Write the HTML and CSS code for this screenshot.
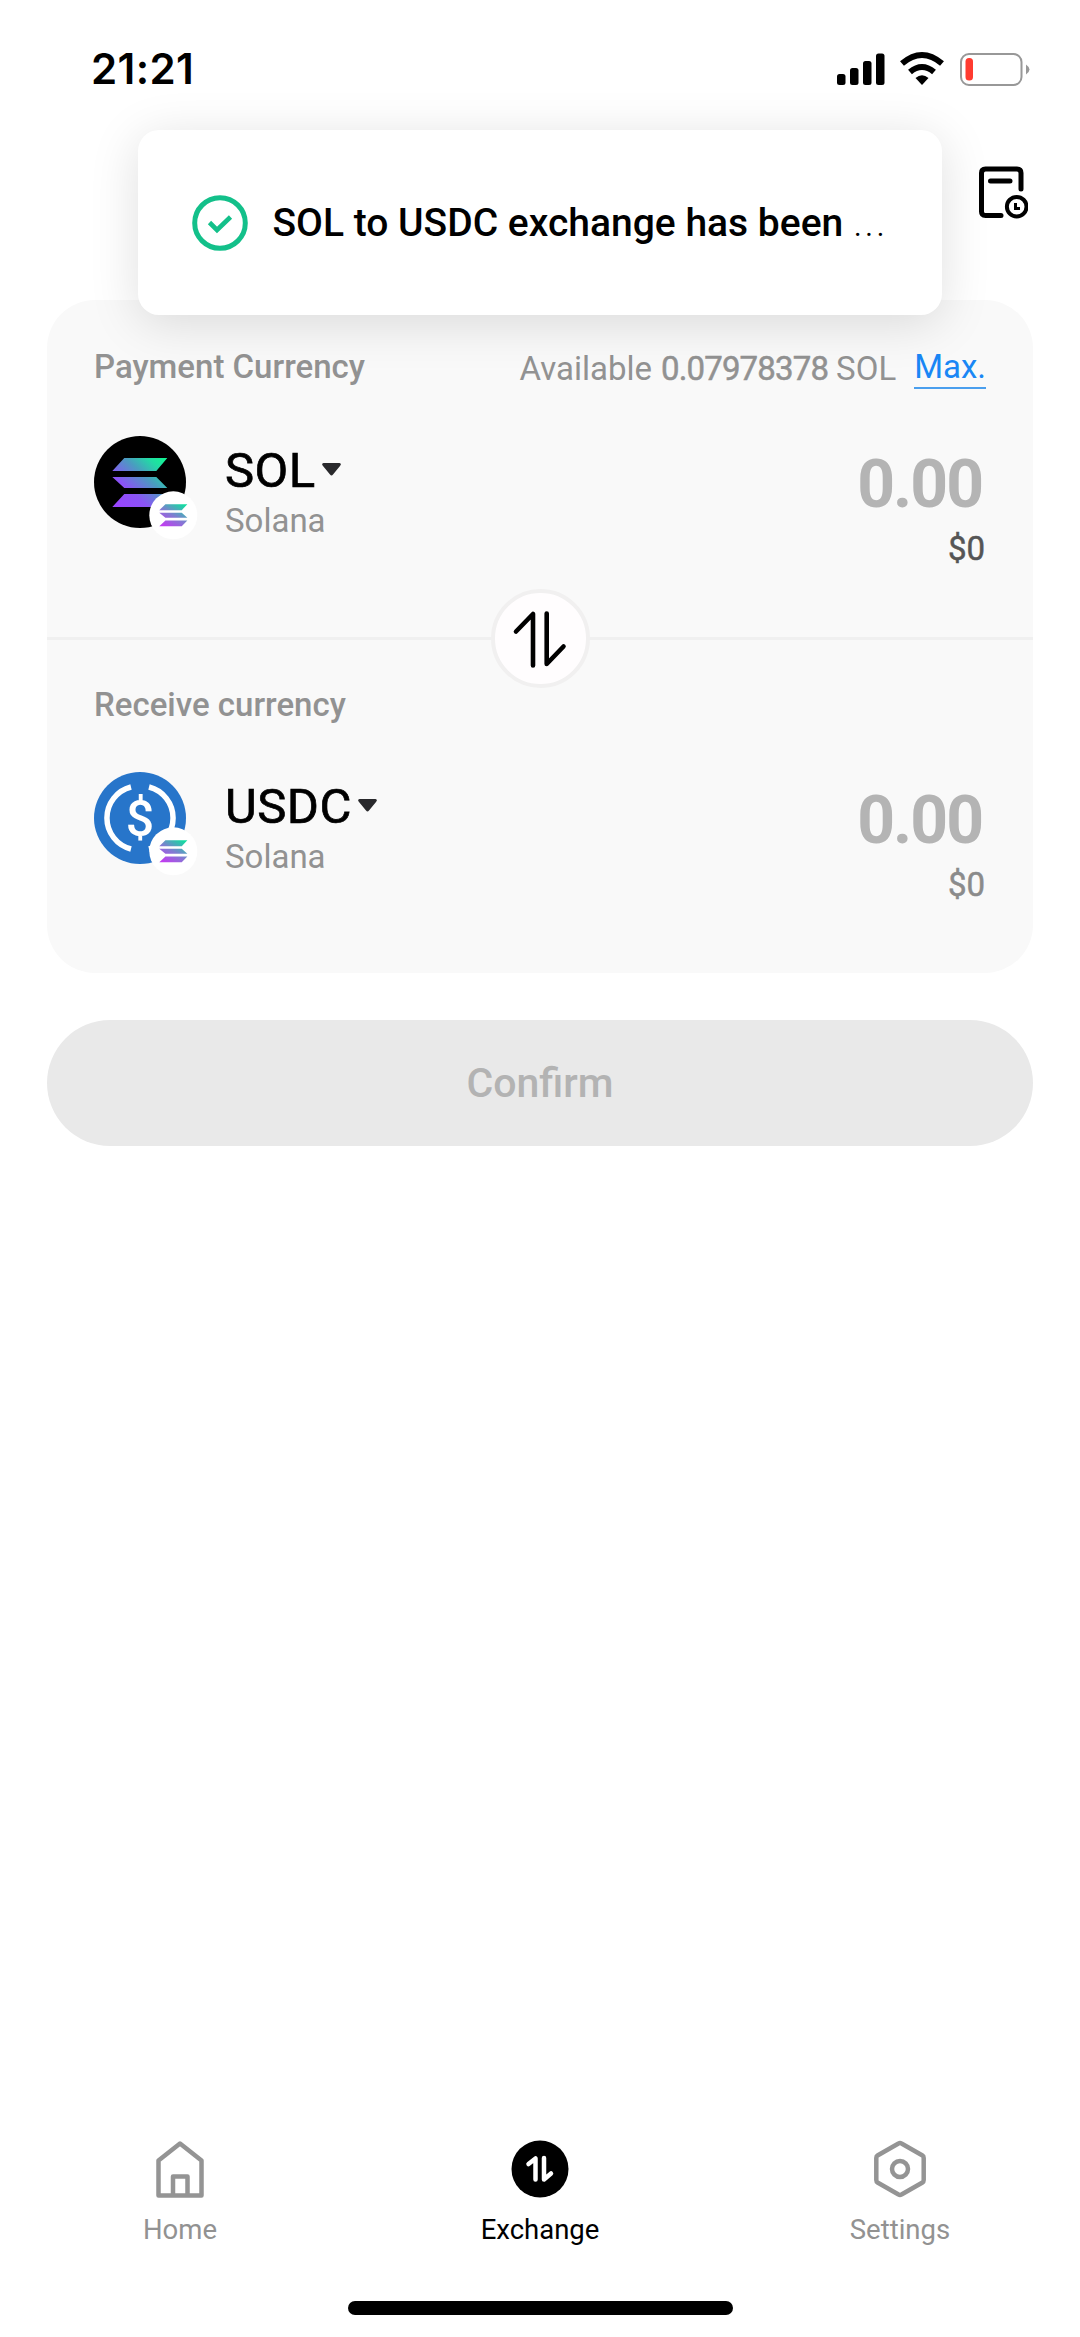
FILE: index.html
```html
<!DOCTYPE html>
<html lang="en">
<head>
<meta charset="utf-8">
<title>Exchange</title>
<link rel="stylesheet" href="styles.css">
</head>
<body>
<svg class="defs" aria-hidden="true">
  <defs>
    <linearGradient id="sol" gradientUnits="userSpaceOnUse" x1="6" y1="48" x2="50" y2="0">
      <stop offset="0" stop-color="#9945ff"/><stop offset=".3" stop-color="#8a54f5"/><stop offset=".62" stop-color="#4a9cc0"/><stop offset=".85" stop-color="#22dba5"/><stop offset="1" stop-color="#14f195"/>
    </linearGradient>
    <linearGradient id="sol-small" gradientUnits="userSpaceOnUse" x1="12" y1="50" x2="46" y2="0">
      <stop offset="0" stop-color="#c03df0"/><stop offset=".5" stop-color="#7d7fd0"/><stop offset="1" stop-color="#12dca0"/>
    </linearGradient>
    <path id="bars" d="M12 0H55L44 13H0ZM0 19H44L55 30H12ZM12 36H55L44 49H0Z"/>
  </defs>
</svg>
<main class="screen">
  <header class="status">
    <span class="time">21:21</span>
    <svg class="indicators" width="194" height="36" viewBox="836 50 194 36">
      <g><rect x="837" y="73" width="8.5" height="11" rx="2.5"/><rect x="850" y="67" width="8.5" height="17" rx="2.5"/><rect x="863" y="60" width="8.5" height="24" rx="2.5"/><rect x="876" y="52.5" width="8.5" height="31.5" rx="2.5"/></g>
      <g fill="none" stroke="#000" stroke-width="6"><path d="M902 62.5Q922 45.500 942 62.500"/><path d="M910 71Q922 61 934 71"/></g>
      <path d="M915.500 77Q922 71.500 928.500 77L922 84Z"/>
      <rect x="961" y="53" width="60.500" height="31" rx="8" fill="none" stroke="#989898" stroke-width="2"/>
      <rect x="965.500" y="57" width="7.500" height="22.500" rx="3.5" fill="#ff3b30"/>
      <path d="M1026 63.500Q1033 68.500 1026 73.500Z" fill="#989898"/>
    </svg>
  </header>
  <div class="topbar">
    <svg width="52" height="56" viewBox="976 164 52 56" fill="none" stroke="#000" stroke-width="5" stroke-linecap="round" stroke-linejoin="round">
      <path d="M1021 189V173Q1021 169 1017 169H985.500Q981.500 169 981.500 173V211.500Q981.500 215.500 985.500 215.500H1001M990.500 181H1010"/>
      <circle cx="1016.700" cy="206.700" r="9.800" stroke-width="4"/>
      <path d="M1015.500 203V208.500H1020" stroke-width="3" stroke-linecap="butt" stroke-linejoin="miter"/>
    </svg>
  </div>

  <section class="card">
    <div class="side">
      <div class="caption">
        <span class="label pay">Payment Currency</span>
        <span class="available"><span class="word">Available</span><span class="figure">0.07978378</span><span class="unit">SOL</span><a class="max">Max.</a></span>
      </div>
      <div class="row">
        <svg class="coin" width="106" height="106" viewBox="0 0 106 106">
          <circle cx="46" cy="46" r="46"/>
          <use href="#bars" transform="translate(18.300 22)" fill="url(#sol)"/>
          <circle cx="79.300" cy="79.300" r="24" fill="#fff"/>
          <use href="#bars" transform="translate(65.300 68.300) scale(.51 .45)" fill="url(#sol-small)"/>
        </svg>
        <div class="token">
          <div class="symbol"><span class="sol">SOL</span><svg class="caret" width="19" height="13" viewBox="0 0 19 13"><path d="M1.500 0H17.500Q20 .5 18 3L11 11.500Q9.500 13.500 8 11.500L1 3Q-1 .5 1.500 0Z" fill="#29292c"/></svg></div>
          <div class="network">Solana</div>
        </div>
        <div class="amount"><div class="value">0.00</div><div class="fiat strong">$0</div></div>
      </div>
    </div>
    <div class="divider">
      <button class="swap" aria-label="Swap"><svg width="60" height="60" viewBox="511 609 60 60" fill="none" stroke="#000" stroke-width="4.600" stroke-linecap="round" stroke-linejoin="round"><path d="M517 631.500L534 614V665.500M547.700 613.500V664L564.500 646.500"/></svg></button>
    </div>
    <div class="side second">
      <div class="caption"><span class="label">Receive currency</span></div>
      <div class="row">
        <svg class="coin" width="106" height="106" viewBox="0 0 106 106">
          <circle cx="46" cy="46" r="46" fill="#2775ca"/>
          <path d="M37 15A32 32 0 0 0 37 77M55 15A32 32 0 0 1 55 77" fill="none" stroke="#fff" stroke-width="5.500"/>
          <text class="dollar" x="46" y="63.500" text-anchor="middle">$</text>
          <circle cx="79.300" cy="79.300" r="24" fill="#fff"/>
          <use href="#bars" transform="translate(65.300 68.300) scale(.51 .45)" fill="url(#sol-small)"/>
        </svg>
        <div class="token">
          <div class="symbol"><span class="usdc">USDC</span><svg class="caret" width="19" height="13" viewBox="0 0 19 13"><path d="M1.500 0H17.500Q20 .5 18 3L11 11.500Q9.500 13.500 8 11.500L1 3Q-1 .5 1.500 0Z" fill="#29292c"/></svg></div>
          <div class="network">Solana</div>
        </div>
        <div class="amount"><div class="value">0.00</div><div class="fiat">$0</div></div>
      </div>
    </div>
  </section>

  <button class="confirm">Confirm</button>

  <nav class="tabs">
    <a class="tab">
      <svg width="60" height="60" viewBox="0 0 60 60" fill="none" stroke="#949494" stroke-width="4.500" stroke-linejoin="round"><path d="M8.500 21.500L30 4.500L51.500 21.500V56.500H8.500ZM23 56V37.500H37.500V56"/></svg>
      <span>Home</span>
    </a>
    <a class="tab active">
      <svg width="60" height="60" viewBox="0 0 60 60"><circle cx="30" cy="30" r="28.500"/><path d="M18.500 25L25.500 19.500V40.500M34 19V40.500L41 34.500" fill="none" stroke="#fff" stroke-width="4.500" stroke-linecap="round" stroke-linejoin="round"/></svg>
      <span>Exchange</span>
    </a>
    <a class="tab">
      <svg width="60" height="60" viewBox="0 0 60 60" fill="none" stroke="#949494" stroke-width="4.500" stroke-linejoin="round"><path d="M28.500 4.500Q30 3.500 31.500 4.500L52.500 16.500Q53.700 17.200 53.700 19V41Q53.700 42.800 52.500 43.500L31.500 55.500Q30 56.500 28.500 55.500L7.500 43.500Q6.300 42.800 6.300 41V19Q6.300 17.200 7.500 16.500Z"/><circle cx="30" cy="30" r="8"/></svg>
      <span>Settings</span>
    </a>
  </nav>
  <div class="home-indicator"></div>

  <div class="toast" role="status">
    <svg width="56" height="56" viewBox="0 0 56 56" fill="none" stroke="#13c08a"><circle cx="28" cy="28" r="25.300" stroke-width="5"/><path d="M17.500 27.500L25 35L38.500 22" stroke-width="4.600"/></svg>
    <span class="message">SOL to USDC exchange has been</span><span class="dots">...</span>
  </div>
</main>
</body>
</html>
```
FILE: styles.css
```css
* { box-sizing: border-box; }
body { margin: 0; background: #fff; font-family: Roboto, "Liberation Sans", sans-serif; color: #000; }
button { border: 0; padding: 0; font: inherit; }
svg { display: block; flex: none; }
.defs { position: absolute; width: 0; height: 0; }
.screen { position: relative; width: 1080px; height: 2337px; display: flex; flex-direction: column; overflow: hidden; background: #fff; }

.status { height: 137px; padding: 0 50px 0 91px; display: flex; align-items: center; justify-content: space-between; flex: none; }
.time { font: 600 42px/50px Inter, sans-serif; letter-spacing: .4px; }
.topbar { height: 163px; padding: 27px 52px 0 0; display: flex; justify-content: flex-end; flex: none; }

.card { flex: none; margin: 0 47px; height: 673px; border-radius: 48px; background: #f9f9f9; display: flex; flex-direction: column; }
.side { height: 337px; padding: 47px 47px 0; flex: none; }
.second { padding-top: 45px; height: 333px; }
.caption { height: 40px; display: flex; justify-content: space-between; font-size: 33px; line-height: 40px; color: #929292; white-space: nowrap; }
.label { font-weight: 500; }
.available { display: flex; line-height: 43px; }
.figure { margin-left: 9px; letter-spacing: -.85px; -webkit-text-stroke: .5px #929292; }
.unit { margin-left: 8px; }
.max { margin-left: 18px; height: 42px; line-height: 40px; color: #1a87f5; border-bottom: 2px solid #4a9fee; }
.row { display: flex; margin-top: 49px; }
.second .row { margin-top: 47px; }
.token { margin-left: 25px; padding-top: 6px; }
.symbol { display: flex; font-size: 49px; line-height: 58px; letter-spacing: .5px; -webkit-text-stroke: .7px #000; }
.caret { margin: 21px 0 0 6px; }
.network { margin-top: 1px; font-size: 33px; line-height: 40px; color: #929292; }
.amount { margin-left: auto; text-align: right; }
.value { margin-top: 12px; height: 74px; padding-right: 4px; font-size: 66px; line-height: 74px; font-weight: 700; color: #b4b4b4; letter-spacing: -2px; }
.fiat { margin-top: 7px; padding-right: 1px; font-size: 33px; line-height: 40px; color: #8b8b8b; -webkit-text-stroke: .5px currentColor; }
.strong { color: #555; }
.divider { height: 3px; background: #f0f0f0; display: flex; align-items: center; justify-content: center; }
.swap { flex: none; width: 99px; height: 99px; border-radius: 50%; border: 4px solid #f1f0f0; background: #fffdfe; display: flex; align-items: center; justify-content: center; }
.dollar { font: 500 50px Roboto, sans-serif; fill: #fff; }

.confirm { flex: none; margin: 47px 47px 0; height: 126px; border-radius: 63px; background: #e9e9e9; color: #b3b3b3; font-size: 41px; font-weight: 500; }

.tabs { margin-top: auto; height: 162px; flex: none; display: grid; grid-template-columns: repeat(3, 1fr); }
.tab { display: flex; flex-direction: column; align-items: center; font-size: 27.5px; line-height: 32px; color: #929292; }
.tab span { margin-top: 15px; }
.active { color: #000; }
.home-indicator { flex: none; width: 385px; height: 14px; margin: 0 auto 22px; border-radius: 7px; background: #000; }

.toast { position: absolute; left: 138px; top: 130px; width: 804px; height: 185px; padding-left: 54px; border-radius: 21px; background: #fff; box-shadow: 0 8px 50px rgba(0,0,0,.13); display: flex; align-items: center; white-space: nowrap; }
.message { margin-left: 24.500px; font-size: 39px; font-weight: 500; }
.dots { margin-left: 10px; font-size: 39px; font-weight: 300; letter-spacing: 2px; }
```
